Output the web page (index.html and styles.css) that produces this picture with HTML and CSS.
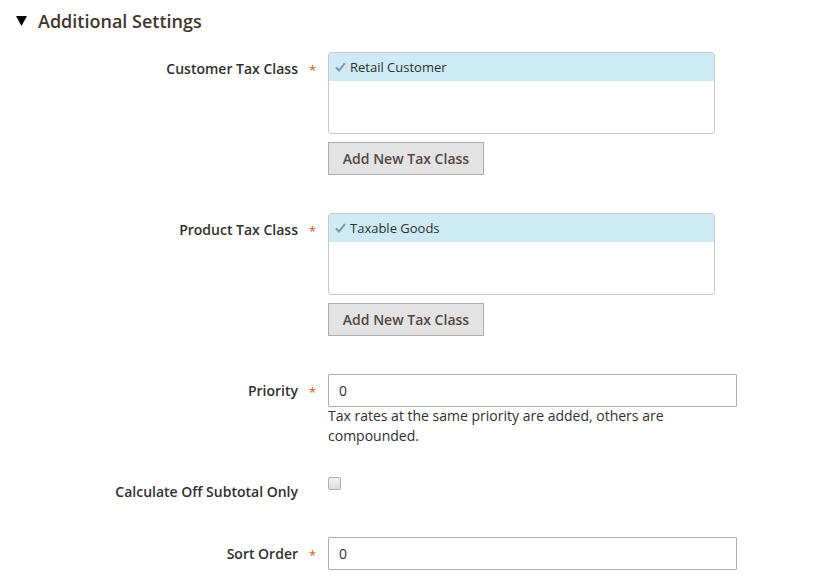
FILE: index.html
```html
<!DOCTYPE html>
<html>
<head>
<meta charset="utf-8">
<link rel="stylesheet" href="styles.css">
</head>
<body>
<div class="section">
  <div class="section-title"><svg class="tri" width="11" height="10" viewBox="0 0 11 10"><path d="M0 0 H11 L5.5 10 Z" fill="#000"/></svg><span>Additional Settings</span></div>
  <div class="form">
    <div class="row row-select">
      <div class="label"><span>Customer Tax Class</span><span class="req">*</span></div>
      <div class="control">
        <div class="multiselect">
          <div class="opt selected"><svg class="check" width="11" height="10" viewBox="0 0 11 10"><path d="M1 5.5 L4 8.5 L10 1" fill="none" stroke="#7d97a5" stroke-width="2"/></svg>Retail Customer</div>
        </div>
        <button class="btn">Add New Tax Class</button>
      </div>
    </div>
    <div class="row row-select">
      <div class="label"><span>Product Tax Class</span><span class="req">*</span></div>
      <div class="control">
        <div class="multiselect">
          <div class="opt selected"><svg class="check" width="11" height="10" viewBox="0 0 11 10"><path d="M1 5.5 L4 8.5 L10 1" fill="none" stroke="#7d97a5" stroke-width="2"/></svg>Taxable Goods</div>
        </div>
        <button class="btn">Add New Tax Class</button>
      </div>
    </div>
    <div class="row row-input">
      <div class="label"><span>Priority</span><span class="req">*</span></div>
      <div class="control">
        <input class="text" type="text" value="0">
        <div class="note">Tax rates at the same priority are added, others are compounded.</div>
      </div>
    </div>
    <div class="row row-check">
      <div class="label"><span>Calculate Off Subtotal Only</span><span class="req"></span></div>
      <div class="control">
        <span class="checkbox"></span>
      </div>
    </div>
    <div class="row row-input">
      <div class="label"><span>Sort Order</span><span class="req">*</span></div>
      <div class="control">
        <input class="text" type="text" value="0">
      </div>
    </div>
  </div>
</div>
</body>
</html>
```
FILE: styles.css
```css
* { box-sizing: border-box; }
body {
  margin: 0;
  background: #fff;
  font-family: "Open Sans", "Liberation Sans", sans-serif;
  color: #303030;
}
.section { padding: 9px 0 0 0; }
.section-title {
  display: flex;
  align-items: center;
  padding-left: 16px;
  font-size: 18px;
  font-weight: 600;
  color: #41362f;
  height: 24px;
}
.tri { margin-right: 11px; }
.form { padding-top: 19px; }
.row {
  display: grid;
  grid-template-columns: 328px 409px;
}
.row-select { margin-bottom: 38px; }
.row-input { margin-bottom: 29px; }
.row-check { margin-bottom: 29px; height: 33px; }
.label {
  display: flex;
  justify-content: flex-end;
  align-items: flex-start;
  font-size: 14px;
  font-weight: 600;
  padding-top: 7px;
  line-height: 20px;
}
.req {
  color: #eb5202;
  width: 30px;
  padding-left: 11px;
  font-size: 13px;
  font-weight: 400;
  line-height: 22px;
}
.control { display: flex; flex-direction: column; align-items: flex-start; }
.multiselect {
  width: 387px;
  height: 82px;
  border: 1px solid #c9c9c9;
  border-radius: 3px;
  background: #fff;
}
.opt {
  height: 28px;
  display: flex;
  align-items: center;
  padding-left: 6px;
  font-size: 13px;
  color: #303030;
}
.opt.selected { background: #cdeaf5; }
.check { margin-right: 4px; }
.btn {
  margin-top: 8px;
  width: 156px;
  height: 33px;
  border: 1px solid #adadad;
  background: #e3e3e3;
  color: #514943;
  font-family: "Open Sans", "Liberation Sans", sans-serif;
  font-size: 14px;
  font-weight: 600;
  padding: 0;
  border-radius: 0;
}
.text {
  width: 409px;
  height: 33px;
  border: 1px solid #adadad;
  border-radius: 1px;
  padding: 0 10px;
  font-family: "Open Sans", "Liberation Sans", sans-serif;
  font-size: 14px;
  color: #303030;
  outline: none;
}
.note {
  font-size: 14px;
  line-height: 20px;
  color: #303030;
  margin-top: -1px;
  width: 409px;
}
.checkbox {
  display: block;
  width: 13px;
  height: 13px;
  margin-top: 2px;
  border: 1px solid #adadad;
  border-radius: 2px;
  background: linear-gradient(#f2f2f2, #dcdcdc);
}
```
